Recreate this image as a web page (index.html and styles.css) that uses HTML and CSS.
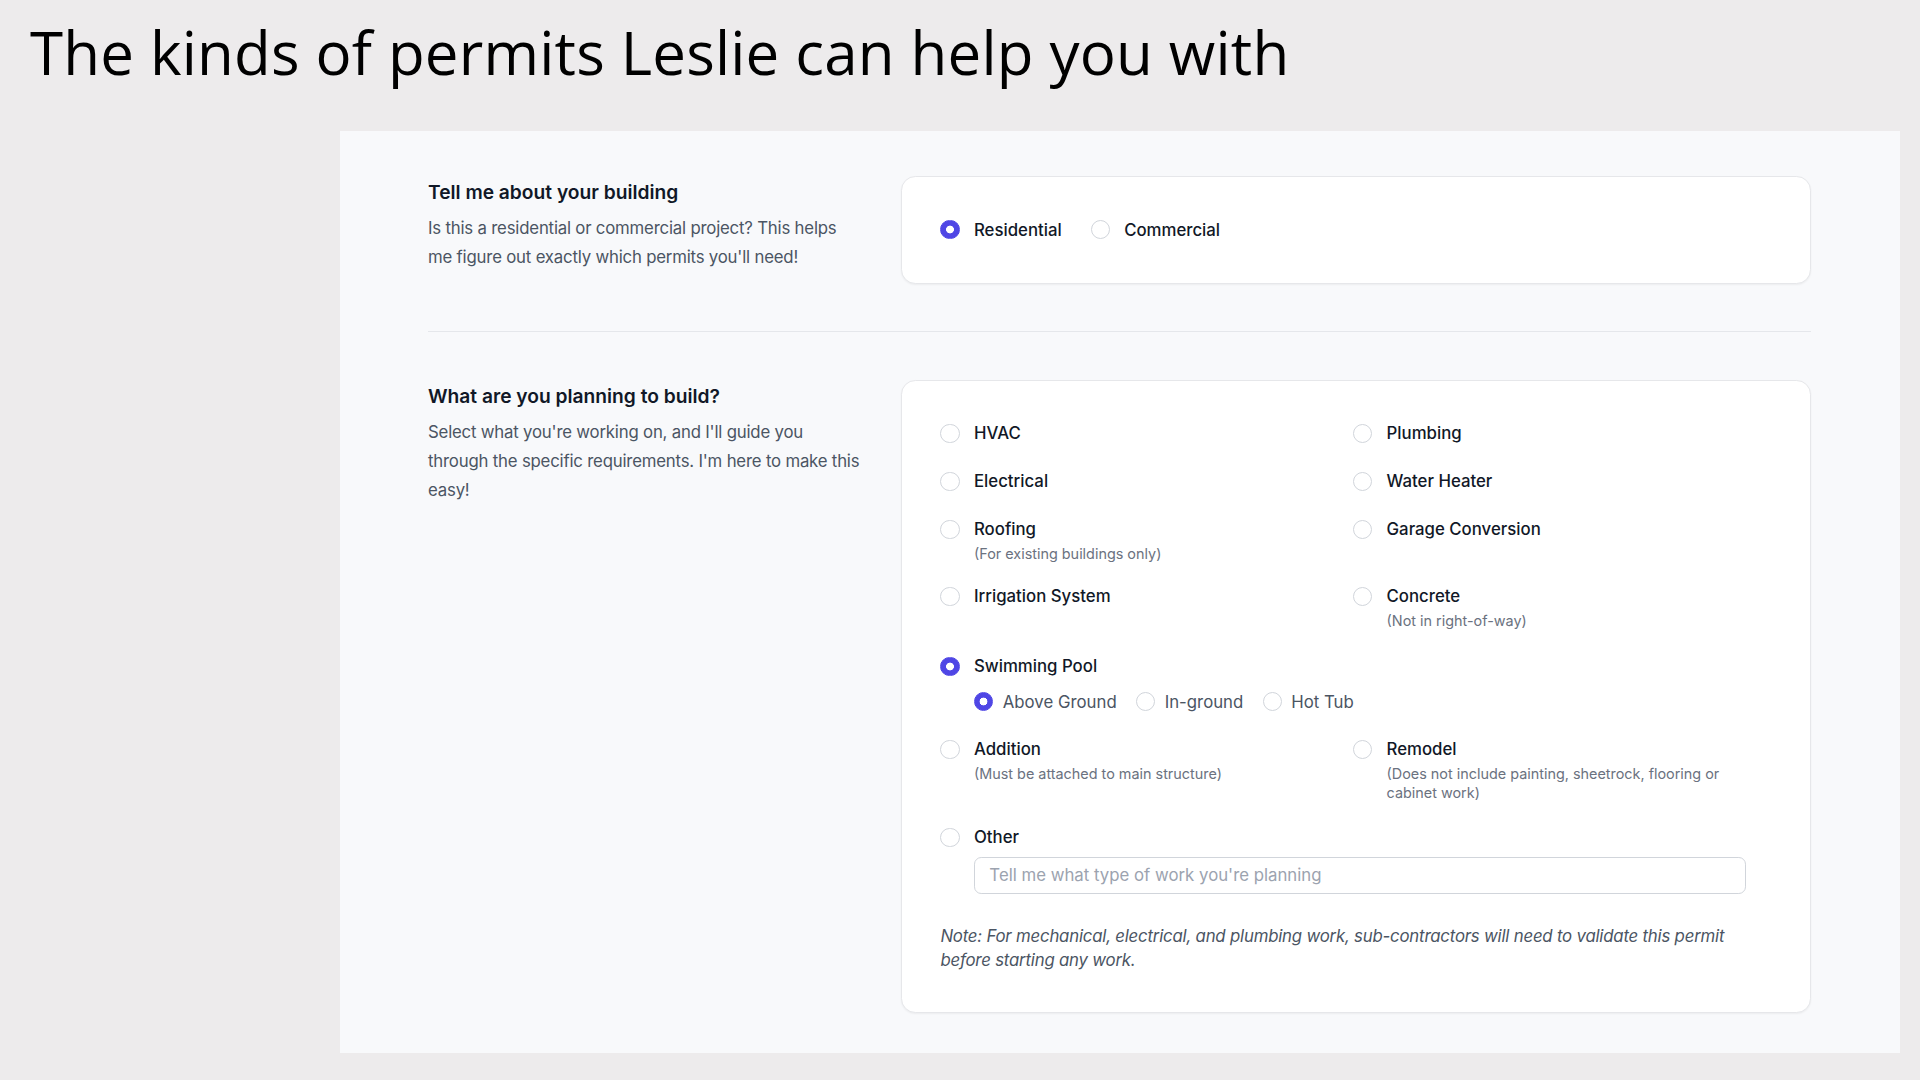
FILE: index.html
```html
<!DOCTYPE html>
<html lang="en">
<head>
<meta charset="utf-8">
<title>Permits</title>
<link rel="stylesheet" href="styles.css">
</head>
<body>
<h1 class="page-title">The kinds of permits Leslie can help you with</h1>
<main class="panel">
  <section class="section section-first">
    <div class="intro">
      <h2 class="intro-title">Tell me about your building</h2>
      <p class="intro-text">Is this a residential or commercial project? This helps me figure out exactly which permits you'll need!</p>
    </div>
    <div class="card">
      <div class="inline-radios">
        <label class="opt"><input type="radio" name="bt" class="radio" checked><span class="opt-label">Residential</span></label>
        <label class="opt"><input type="radio" name="bt" class="radio"><span class="opt-label">Commercial</span></label>
      </div>
    </div>
  </section>
  <hr class="divider">
  <section class="section">
    <div class="intro">
      <h2 class="intro-title">What are you planning to build?</h2>
      <p class="intro-text">Select what you're working on, and I'll guide you through the specific requirements. I'm here to make this easy!</p>
    </div>
    <div class="card card-tall">
      <div class="card-inner">
        <div class="grid">
          <label class="item"><input type="radio" class="radio"><span class="item-body"><span class="item-label">HVAC</span></span></label>
          <label class="item"><input type="radio" class="radio"><span class="item-body"><span class="item-label">Plumbing</span></span></label>
          <label class="item"><input type="radio" class="radio"><span class="item-body"><span class="item-label">Electrical</span></span></label>
          <label class="item"><input type="radio" class="radio"><span class="item-body"><span class="item-label">Water Heater</span></span></label>
          <label class="item"><input type="radio" class="radio"><span class="item-body"><span class="item-label">Roofing</span><span class="item-sub">(For existing buildings only)</span></span></label>
          <label class="item"><input type="radio" class="radio"><span class="item-body"><span class="item-label">Garage Conversion</span></span></label>
          <label class="item"><input type="radio" class="radio"><span class="item-body"><span class="item-label">Irrigation System</span></span></label>
          <label class="item"><input type="radio" class="radio"><span class="item-body"><span class="item-label">Concrete</span><span class="item-sub">(Not in right-of-way)</span></span></label>
          <div class="item span-2 pool">
            <input type="radio" class="radio" checked>
            <div class="item-body">
              <span class="item-label">Swimming Pool</span>
              <div class="sub-radios">
                <label class="sub-opt"><input type="radio" name="pool" class="radio" checked><span>Above Ground</span></label>
                <label class="sub-opt"><input type="radio" name="pool" class="radio"><span>In-ground</span></label>
                <label class="sub-opt"><input type="radio" name="pool" class="radio"><span>Hot Tub</span></label>
              </div>
            </div>
          </div>
          <label class="item"><input type="radio" class="radio"><span class="item-body"><span class="item-label">Addition</span><span class="item-sub">(Must be attached to main structure)</span></span></label>
          <label class="item"><input type="radio" class="radio"><span class="item-body"><span class="item-label">Remodel</span><span class="item-sub">(Does not include painting, sheetrock, flooring or cabinet work)</span></span></label>
          <div class="item span-2 other">
            <input type="radio" class="radio">
            <div class="item-body grow">
              <span class="item-label">Other</span>
              <input type="text" class="text-input" placeholder="Tell me what type of work you're planning">
            </div>
          </div>
        </div>
        <p class="note">Note: For mechanical, electrical, and plumbing work, sub-contractors will need to validate this permit before starting any work.</p>
      </div>
    </div>
  </section>
</main>
</body>
</html>
```
FILE: styles.css
```css
* { box-sizing: border-box; }

html, body {
  margin: 0;
  padding: 0;
}

body {
  background: #edebec;
  font-family: "Inter", "Liberation Sans", sans-serif;
  color: #111827;
  width: 1920px;
  height: 1080px;
  overflow: hidden;
}

.page-title {
  margin: 0;
  padding: 22px 0 0 30px;
  font-family: "Open Sans", "Noto Sans", sans-serif;
  font-weight: 400;
  font-size: 60px;
  line-height: 60px;
  color: #000;
  letter-spacing: 0.2px;
  height: 131px;
}

.panel {
  margin-left: 340px;
  width: 1560px;
  height: 922px;
  background: #f8f9fb;
  padding: 45px 89px 0 88px;
}

.section {
  display: grid;
  grid-template-columns: 437px 1fr;
  column-gap: 36px;
  padding: 48px 0;
}

.section-first {
  padding-top: 0;
  padding-bottom: 47px;
}

.divider {
  margin: 0;
  border: 0;
  height: 1px;
  background: #e5e7eb;
}

.intro-title {
  margin: 0;
  font-size: 19.2px;
  line-height: 33.6px;
  font-weight: 600;
  color: #111827;
}

.intro-text {
  margin: 4.8px 0 0;
  font-size: 16.8px;
  line-height: 28.8px;
  color: #4b5563;
  letter-spacing: -0.2px;
}

.card {
  background: #fff;
  border: 1px solid #e6e7ea;
  border-radius: 14.4px;
  box-shadow: 0 1px 2px rgba(0, 0, 0, 0.05);
  padding: 38.4px;
}

.card-tall {
  padding-bottom: 40px;
}

.inline-radios {
  display: flex;
  gap: 28.8px;
}

.opt {
  display: flex;
  align-items: center;
  height: 28.8px;
}

.opt-label {
  margin-left: 14.4px;
  font-size: 16.8px;
  font-weight: 500;
  color: #111827;
}

.radio {
  appearance: none;
  -webkit-appearance: none;
  margin: 0;
  width: 19.2px;
  height: 19.2px;
  flex: none;
  border-radius: 50%;
  border: 1px solid #d1d5db;
  background: #fff;
}

.radio:checked {
  border-color: #4f46e5;
  background: radial-gradient(circle, #fff 0 3.6px, #4f46e5 4.2px);
}

.card-inner {
  width: 806px;
}

.grid {
  display: grid;
  grid-template-columns: 1fr 1fr;
  column-gap: 19.2px;
  row-gap: 19.2px;
}

.span-2 {
  grid-column: span 2;
}

.item {
  display: flex;
  align-items: flex-start;
}

.pool {
  margin-top: 3px;
}

.other {
  margin-top: 2px;
}

.item > .radio {
  margin-top: 4.8px;
}

.item-body {
  display: flex;
  flex-direction: column;
  margin-left: 14.4px;
}

.grow {
  flex: 1;
}

.item-label {
  font-size: 16.8px;
  line-height: 28.8px;
  font-weight: 500;
  color: #111827;
}

.item-sub {
  font-size: 14.4px;
  line-height: 19.2px;
  color: #6b7280;
}

.sub-radios {
  display: flex;
  gap: 19.2px;
  margin-top: 6px;
}

.sub-opt {
  display: flex;
  align-items: center;
  height: 28.8px;
  font-size: 16.8px;
  color: #4b5563;
}

.sub-opt span {
  margin-left: 9.6px;
}

.text-input {
  margin-top: 4.6px;
  height: 37px;
  width: 100%;
  border: 1px solid #d1d5db;
  border-radius: 7.2px;
  padding: 0 14.4px;
  font-family: "Inter", "Liberation Sans", sans-serif;
  font-size: 16.8px;
  color: #111827;
  background: #fff;
  outline: none;
}

.text-input::placeholder {
  color: #9ca3af;
}

.note {
  margin: 30px 0 0;
  font-size: 16.8px;
  line-height: 24px;
  font-style: italic;
  color: #4b5563;
  letter-spacing: -0.2px;
}
```
